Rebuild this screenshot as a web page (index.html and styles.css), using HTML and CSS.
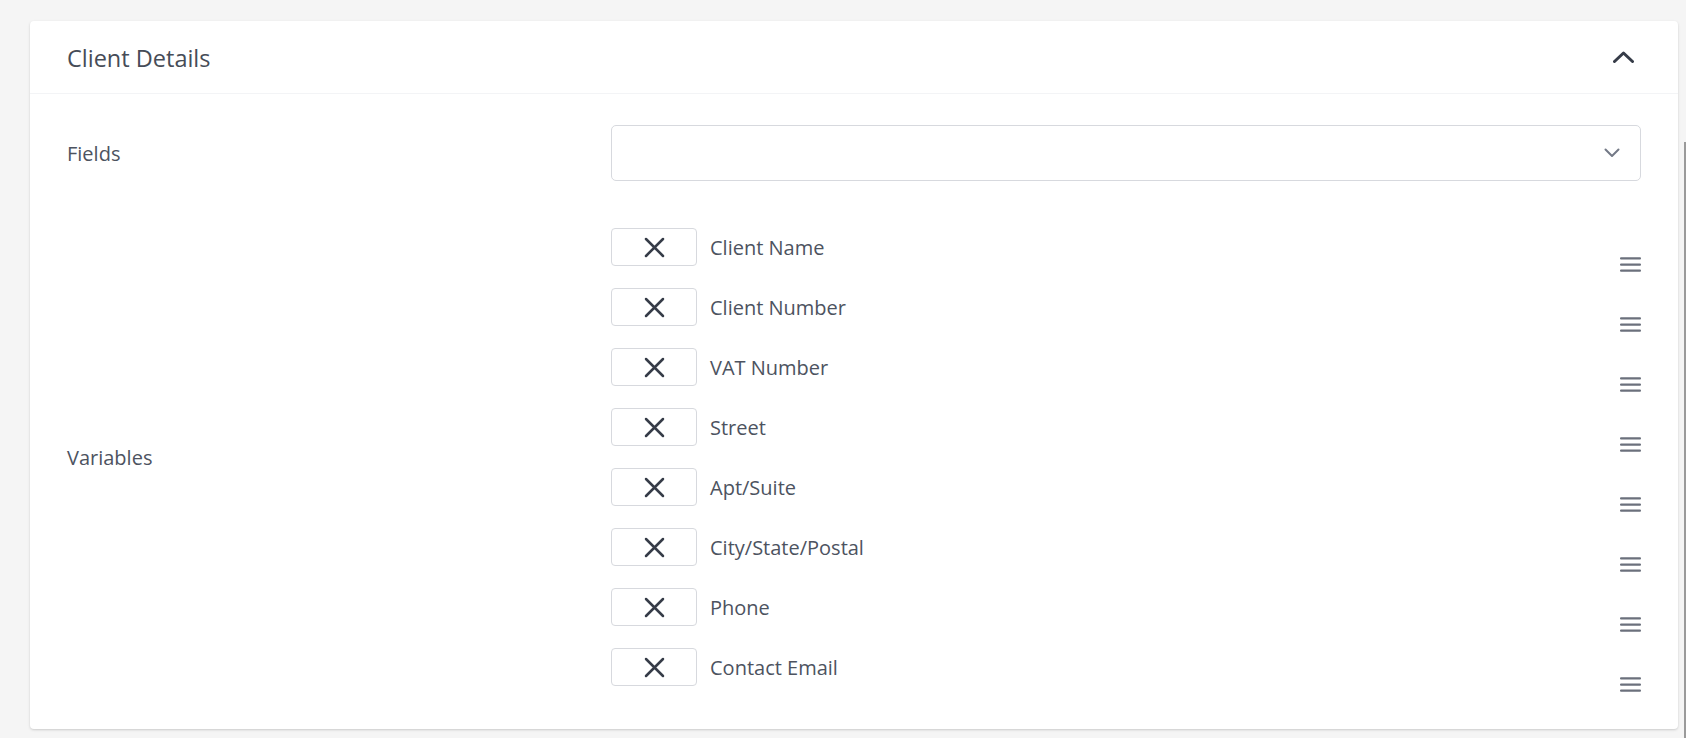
FILE: index.html
```html
<!DOCTYPE html>
<html lang="en">
<head>
<meta charset="utf-8">
<title>Client Details</title>
<link rel="stylesheet" href="styles.css">
</head>
<body>
<div class="card">
  <div class="card-header">
    <h2 class="card-title">Client Details</h2>
    <svg class="chev-up" width="21" height="12" viewBox="0 0 21 12"><polyline points="1.5,10.5 10.5,2 19.5,10.5" fill="none" stroke="currentColor" stroke-width="3" stroke-linecap="round" stroke-linejoin="round"/></svg>
  </div>
  <div class="card-body">
    <div class="form-row fields-row">
      <div class="label">Fields</div>
      <div class="select">
        <svg class="chev-down" width="16" height="10" viewBox="0 0 16 10"><polyline points="1.5,1.5 8,8 14.5,1.5" fill="none" stroke="currentColor" stroke-width="2" stroke-linecap="round" stroke-linejoin="round"/></svg>
      </div>
    </div>
    <div class="form-row vars-row">
      <div class="label vars-label">Variables</div>
      <ul class="var-list">
        <li class="var-item"><div class="var-left"><button class="remove"><svg width="21" height="21" viewBox="0 0 21 21"><path d="M2 2L19 19M19 2L2 19" stroke="currentColor" stroke-width="2.5" stroke-linecap="round"/></svg></button><span class="var-name">Client Name</span></div><svg class="drag" width="21" height="15" viewBox="0 0 21 15"><rect x="0" y="0.3" width="21" height="2.3" rx="1"/><rect x="0" y="6.4" width="21" height="2.3" rx="1"/><rect x="0" y="12.5" width="21" height="2.3" rx="1"/></svg></li>
        <li class="var-item"><div class="var-left"><button class="remove"><svg width="21" height="21" viewBox="0 0 21 21"><path d="M2 2L19 19M19 2L2 19" stroke="currentColor" stroke-width="2.5" stroke-linecap="round"/></svg></button><span class="var-name">Client Number</span></div><svg class="drag" width="21" height="15" viewBox="0 0 21 15"><rect x="0" y="0.3" width="21" height="2.3" rx="1"/><rect x="0" y="6.4" width="21" height="2.3" rx="1"/><rect x="0" y="12.5" width="21" height="2.3" rx="1"/></svg></li>
        <li class="var-item"><div class="var-left"><button class="remove"><svg width="21" height="21" viewBox="0 0 21 21"><path d="M2 2L19 19M19 2L2 19" stroke="currentColor" stroke-width="2.5" stroke-linecap="round"/></svg></button><span class="var-name">VAT Number</span></div><svg class="drag" width="21" height="15" viewBox="0 0 21 15"><rect x="0" y="0.3" width="21" height="2.3" rx="1"/><rect x="0" y="6.4" width="21" height="2.3" rx="1"/><rect x="0" y="12.5" width="21" height="2.3" rx="1"/></svg></li>
        <li class="var-item"><div class="var-left"><button class="remove"><svg width="21" height="21" viewBox="0 0 21 21"><path d="M2 2L19 19M19 2L2 19" stroke="currentColor" stroke-width="2.5" stroke-linecap="round"/></svg></button><span class="var-name">Street</span></div><svg class="drag" width="21" height="15" viewBox="0 0 21 15"><rect x="0" y="0.3" width="21" height="2.3" rx="1"/><rect x="0" y="6.4" width="21" height="2.3" rx="1"/><rect x="0" y="12.5" width="21" height="2.3" rx="1"/></svg></li>
        <li class="var-item"><div class="var-left"><button class="remove"><svg width="21" height="21" viewBox="0 0 21 21"><path d="M2 2L19 19M19 2L2 19" stroke="currentColor" stroke-width="2.5" stroke-linecap="round"/></svg></button><span class="var-name">Apt/Suite</span></div><svg class="drag" width="21" height="15" viewBox="0 0 21 15"><rect x="0" y="0.3" width="21" height="2.3" rx="1"/><rect x="0" y="6.4" width="21" height="2.3" rx="1"/><rect x="0" y="12.5" width="21" height="2.3" rx="1"/></svg></li>
        <li class="var-item"><div class="var-left"><button class="remove"><svg width="21" height="21" viewBox="0 0 21 21"><path d="M2 2L19 19M19 2L2 19" stroke="currentColor" stroke-width="2.5" stroke-linecap="round"/></svg></button><span class="var-name">City/State/Postal</span></div><svg class="drag" width="21" height="15" viewBox="0 0 21 15"><rect x="0" y="0.3" width="21" height="2.3" rx="1"/><rect x="0" y="6.4" width="21" height="2.3" rx="1"/><rect x="0" y="12.5" width="21" height="2.3" rx="1"/></svg></li>
        <li class="var-item"><div class="var-left"><button class="remove"><svg width="21" height="21" viewBox="0 0 21 21"><path d="M2 2L19 19M19 2L2 19" stroke="currentColor" stroke-width="2.5" stroke-linecap="round"/></svg></button><span class="var-name">Phone</span></div><svg class="drag" width="21" height="15" viewBox="0 0 21 15"><rect x="0" y="0.3" width="21" height="2.3" rx="1"/><rect x="0" y="6.4" width="21" height="2.3" rx="1"/><rect x="0" y="12.5" width="21" height="2.3" rx="1"/></svg></li>
        <li class="var-item"><div class="var-left"><button class="remove"><svg width="21" height="21" viewBox="0 0 21 21"><path d="M2 2L19 19M19 2L2 19" stroke="currentColor" stroke-width="2.5" stroke-linecap="round"/></svg></button><span class="var-name">Contact Email</span></div><svg class="drag" width="21" height="15" viewBox="0 0 21 15"><rect x="0" y="0.3" width="21" height="2.3" rx="1"/><rect x="0" y="6.4" width="21" height="2.3" rx="1"/><rect x="0" y="12.5" width="21" height="2.3" rx="1"/></svg></li>
      </ul>
    </div>
  </div>
</div>
<div class="scroll-thumb"></div>
</body>
</html>
```

FILE: styles.css
```css
html, body {
  margin: 0;
  height: 100%;
}
body {
  background: #f5f5f5;
  font-family: "Open Sans", "Noto Sans", sans-serif;
  padding: 21px 8px 0 30px;
  box-sizing: border-box;
  overflow: hidden;
  position: relative;
}
.card {
  background: #fff;
  border-radius: 4px;
  box-shadow: 0 1px 3px rgba(0, 0, 0, 0.12), 0 1px 2px rgba(0, 0, 0, 0.06);
}
.card-header {
  height: 73px;
  box-sizing: border-box;
  padding: 0 44px 0 37px;
  display: flex;
  align-items: center;
  justify-content: space-between;
  border-bottom: 1px solid #f3f4f6;
}
.card-title {
  margin: 4px 0 0 0;
  font-size: 23.5px;
  font-weight: 400;
  color: #464c57;
  line-height: 1;
}
.chev-up {
  color: #363c48;
  display: block;
}
.card-body {
  padding: 31px 37px 37px 37px;
}
.form-row {
  display: grid;
  grid-template-columns: 544px 1fr;
  align-items: center;
}
.label {
  font-size: 20px;
  color: #4d535f;
}
.vars-label {
  margin-bottom: 6px;
}
.select {
  height: 56px;
  box-sizing: border-box;
  border: 1px solid #d7d9de;
  border-radius: 5px;
  display: flex;
  align-items: center;
  justify-content: flex-end;
  padding-right: 20px;
}
.chev-down {
  color: #737986;
  display: block;
}
.vars-row {
  margin-top: 47px;
}
.var-list {
  list-style: none;
  margin: 0;
  padding: 0;
  display: flex;
  flex-direction: column;
  gap: 16px;
}
.var-item {
  height: 44px;
  display: flex;
  justify-content: space-between;
  align-items: flex-start;
}
.var-left {
  display: flex;
  align-items: center;
  gap: 13px;
}
.remove {
  width: 86px;
  height: 38px;
  box-sizing: border-box;
  background: #fff;
  border: 1px solid #d7d9de;
  border-radius: 4px;
  display: flex;
  align-items: center;
  justify-content: center;
  padding: 0;
  color: #363c48;
}
.remove svg {
  display: block;
}
.var-name {
  font-size: 20px;
  color: #4d535f;
}
.drag {
  fill: #6b707c;
  margin-top: 29px;
  display: block;
}
.scroll-thumb {
  position: absolute;
  right: 0;
  top: 142px;
  bottom: 0;
  width: 2px;
  background: #9a9a9a;
}
```
